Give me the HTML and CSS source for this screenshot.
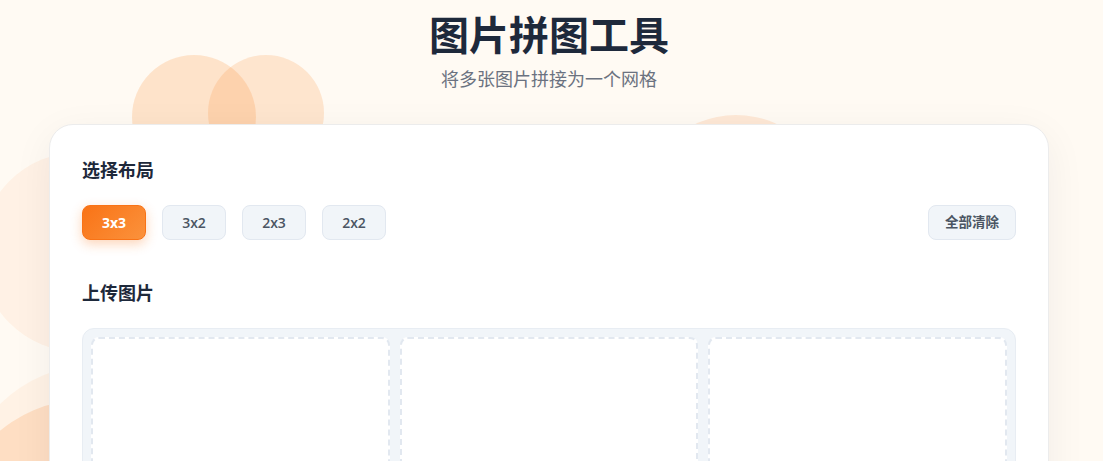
FILE: index.html
```html
<!DOCTYPE html>
<html lang="zh-CN">
<head>
<meta charset="UTF-8">
<title>图片拼图工具</title>
<link rel="stylesheet" href="styles.css">
</head>
<body>
<div class="page">
  <div class="bubbles" aria-hidden="true">
    <span class="bubble b1"></span>
    <span class="bubble b2"></span>
    <span class="bubble b3"></span>
    <span class="bubble b4"></span>
    <span class="bubble b5"></span>
    <span class="bubble b6"></span>
  </div>

  <header class="hero">
    <h1 class="hero-title">图片拼图工具</h1>
    <p class="hero-sub">将多张图片拼接为一个网格</p>
  </header>

  <main class="card">
    <section class="section">
      <h2 class="section-title">选择布局</h2>
      <div class="toolbar">
        <div class="layout-group">
          <button class="btn btn-active">3x3</button>
          <button class="btn">3x2</button>
          <button class="btn">2x3</button>
          <button class="btn">2x2</button>
        </div>
        <button class="btn btn-clear">全部清除</button>
      </div>
    </section>

    <section class="section section-upload">
      <h2 class="section-title">上传图片</h2>
      <div class="grid">
        <div class="cell"></div>
        <div class="cell"></div>
        <div class="cell"></div>
        <div class="cell"></div>
        <div class="cell"></div>
        <div class="cell"></div>
        <div class="cell"></div>
        <div class="cell"></div>
        <div class="cell"></div>
      </div>
    </section>
  </main>
</div>
</body>
</html>
```

FILE: styles.css
```css
* {
  box-sizing: border-box;
}

html, body {
  margin: 0;
  padding: 0;
  overflow: hidden;
  height: 100%;
}

body {
  background: #fffaf3;
  font-family: Inter, "Noto Sans CJK SC", "Noto Sans", sans-serif;
  font-feature-settings: "calt" 0;
  color: #1e293b;
}

.page {
  position: relative;
  min-height: 100%;
  padding: 12px 5px 40px 0;
}

.bubbles {
  position: absolute;
  inset: 0;
  overflow: hidden;
  pointer-events: none;
}

.bubble {
  position: absolute;
  border-radius: 50%;
  background: #fb923c;
}

.b1 { left: 132px; top: 55px; width: 124px; height: 124px; opacity: 0.22; }
.b2 { left: 208px; top: 55px; width: 116px; height: 116px; opacity: 0.2; }
.b3 { left: 638px; top: 115px; width: 196px; height: 196px; opacity: 0.16; }
.b4 { left: -20px; top: 152px; width: 200px; height: 200px; opacity: 0.08; }
.b5 { left: -40px; top: 365px; width: 270px; height: 270px; opacity: 0.07; }
.b6 { left: -46px; top: 400px; width: 260px; height: 260px; opacity: 0.2; }

.hero {
  position: relative;
  text-align: center;
}

.hero-title {
  margin: 0;
  font-size: 40px;
  line-height: 48px;
  font-weight: 700;
  color: #1e293b;
}

.hero-sub {
  margin: 6px 0 0;
  font-size: 18px;
  line-height: 27px;
  font-weight: 400;
  color: #6b7280;
}

.card {
  position: relative;
  width: 1000px;
  margin: 31px auto 0;
  background: #ffffff;
  border: 1px solid #ececec;
  border-radius: 24px;
  padding: 32px;
  box-shadow: 0 10px 40px rgba(30, 41, 59, 0.06);
}

.section-title {
  margin: 0 0 20px;
  font-size: 18px;
  line-height: 28px;
  font-weight: 700;
  color: #1e293b;
}

.section-upload {
  margin-top: 40px;
}

.toolbar {
  display: flex;
  justify-content: space-between;
  align-items: center;
}

.layout-group {
  display: flex;
  gap: 16px;
}

.btn {
  font-family: "Open Sans", "Noto Sans CJK SC", sans-serif;
  min-width: 64px;
  height: 35px;
  padding: 0 16px;
  font-size: 14px;
  font-weight: 600;
  line-height: 33px;
  color: #4b5563;
  background: #f1f5f9;
  border: 1px solid #e2e8f0;
  border-radius: 8px;
  text-align: center;
}

.btn-active {
  color: #ffffff;
  font-weight: 700;
  background: linear-gradient(135deg, #f97316, #fb923c);
  border-color: #f97316;
  box-shadow: 0 4px 12px rgba(249, 115, 22, 0.3);
}

.btn-clear {
  min-width: 88px;
  font-size: 13.5px;
}

.grid {
  display: grid;
  grid-template-columns: repeat(3, 1fr);
  gap: 10px;
  padding: 8px;
  background: #f1f5f9;
  border: 1px solid #e8edf3;
  border-radius: 12px;
}

.cell {
  aspect-ratio: 1;
  background: #ffffff;
  border: 2px dashed #e2e8f0;
  border-radius: 8px;
}
```
